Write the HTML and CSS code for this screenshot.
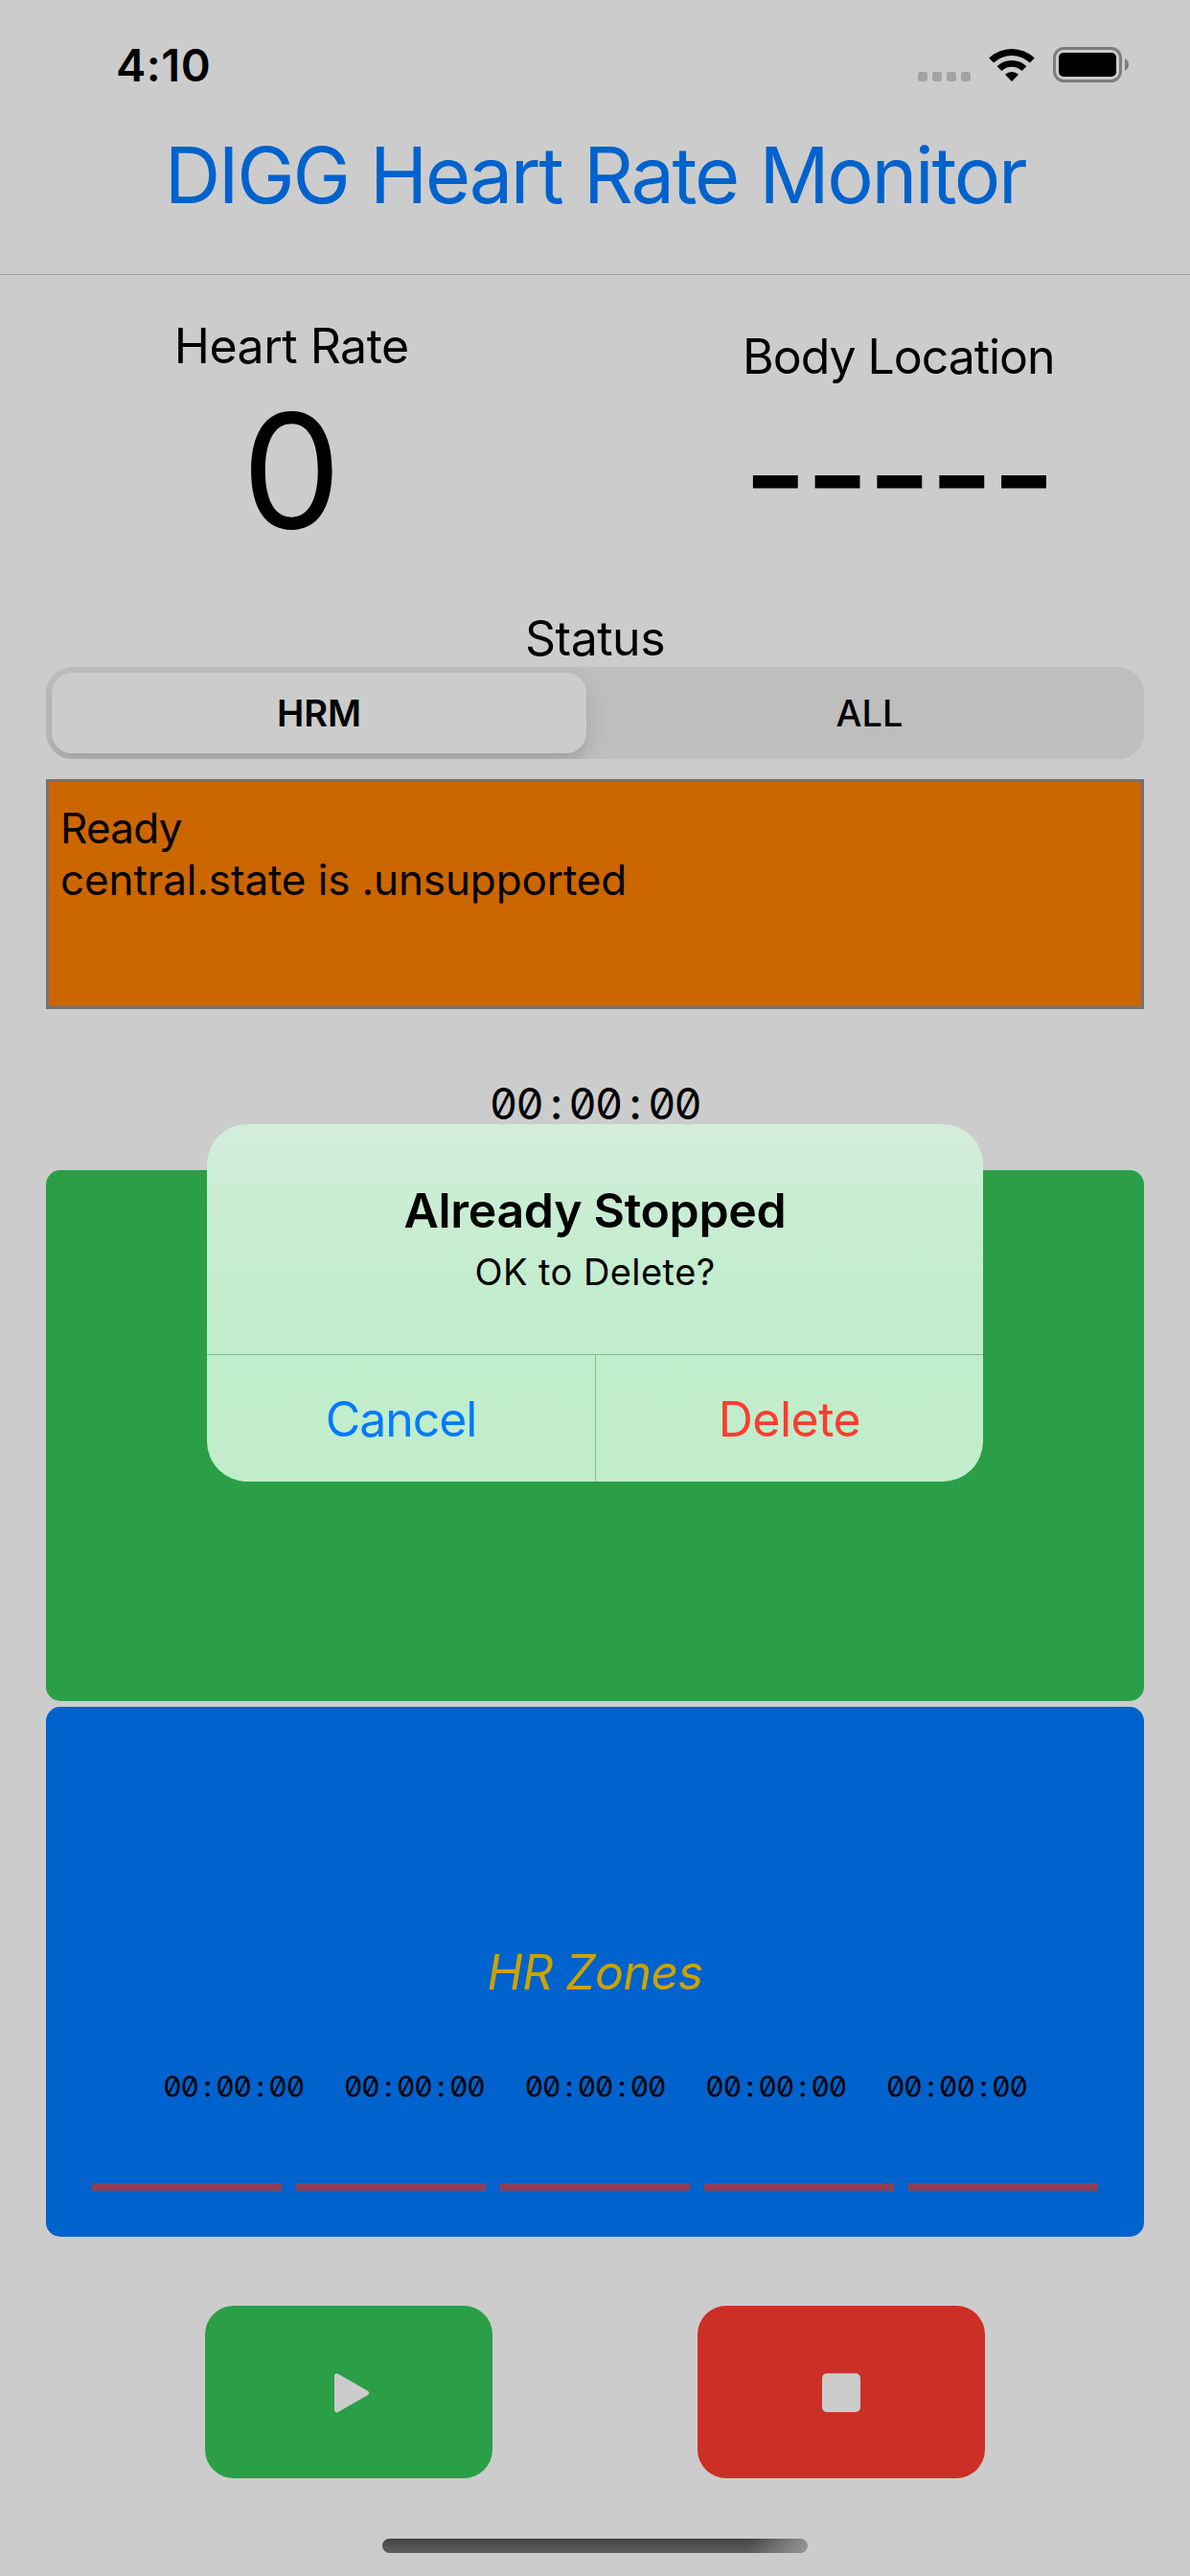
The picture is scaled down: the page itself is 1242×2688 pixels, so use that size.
FILE: index.html
```html
<!DOCTYPE html>
<html lang="en">
<head>
<meta charset="utf-8">
<title>DIGG Heart Rate Monitor</title>
<link rel="stylesheet" href="styles.css">
</head>
<body>
<div class="screen">
  <div class="status-bar">
    <span class="clock">4:10</span>
    <div class="indicators">
      <div class="signal"><i></i><i></i><i></i><i></i></div>
      <svg class="wifi" width="50" height="38" viewBox="0 0 50 38">
        <path d="M1.2 11.6A34 34 0 0 1 48.8 11.6L43.9 16.6A27 27 0 0 0 6.1 16.6Z"/>
        <path d="M9.6 20.2A22 22 0 0 1 40.4 20.2L35.6 25.1A15.2 15.2 0 0 0 14.4 25.1Z"/>
        <path d="M18 28.8A10.2 10.2 0 0 1 32 28.8L25 36Z"/>
      </svg>
      <svg class="battery" width="80" height="37" viewBox="0 0 80 37">
        <rect class="shell" x="1.5" y="1.5" width="69" height="34" rx="10"/>
        <rect x="6" y="6" width="60" height="25" rx="5"/>
        <path class="cap" d="M75 12.2C77.6 13.4 79 15.8 79 18.5S77.600 23.600 75 24.800Z"/>
      </svg>
    </div>
  </div>

  <header class="title-bar"><h1>DIGG Heart Rate Monitor</h1></header>

  <section class="metrics">
    <div class="metric">
      <div class="label">Heart Rate</div>
      <div class="rate">0</div>
    </div>
    <div class="metric lowered">
      <div class="label wide">Body Location</div>
      <div class="location">-----</div>
    </div>
  </section>

  <div class="label">Status</div>
  <div class="segmented">
    <div class="segment selected">HRM</div>
    <div class="segment">ALL</div>
  </div>

  <div class="log">
    <p class="log-ready">Ready</p>
    <p>central.state is .unsupported</p>
  </div>

  <div class="timer">00<b>:</b>00<b>:</b>00</div>

  <div class="panel chart"></div>
  <div class="panel zones">
    <h2>HR Zones</h2>
    <div class="zone-times">
      <span class="mono">00<b>:</b>00<b>:</b>00</span>
      <span class="mono">00<b>:</b>00<b>:</b>00</span>
      <span class="mono">00<b>:</b>00<b>:</b>00</span>
      <span class="mono">00<b>:</b>00<b>:</b>00</span>
      <span class="mono">00<b>:</b>00<b>:</b>00</span>
    </div>
    <div class="zone-bars"><i></i><i></i><i></i><i></i><i></i></div>
  </div>

  <div class="controls">
    <div class="button start">
      <svg width="300" height="180" viewBox="0 0 300 180">
        <path d="M137.500 73.200 168.500 91 137.500 108.800Z"/>
      </svg>
    </div>
    <div class="button stop">
      <svg width="300" height="180" viewBox="0 0 300 180">
        <rect x="130" y="70.500" width="40" height="40.500" rx="5"/>
      </svg>
    </div>
  </div>

  <div class="home-indicator"></div>

  <div class="alert">
    <div class="alert-body">
      <div class="alert-title">Already Stopped</div>
      <div class="alert-message">OK to Delete?</div>
    </div>
    <div class="alert-actions">
      <div class="action cancel">Cancel</div>
      <div class="action delete">Delete</div>
    </div>
  </div>
</div>
</body>
</html>
```
FILE: styles.css
```css
* { box-sizing: border-box; }

body {
  margin: 0;
  background: #ccc;
  color: #000;
  font-family: Inter, "Liberation Sans", sans-serif;
}

h1, h2, p { margin: 0; font-weight: 400; }

.screen {
  position: relative;
  width: 1242px;
  height: 2688px;
  overflow: hidden;
}

.status-bar {
  display: flex;
  justify-content: space-between;
  height: 120px;
  padding: 0 63px 0 121px;
}
.clock {
  font-size: 47px;
  font-weight: 600;
  line-height: 136px;
  letter-spacing: 0.5px;
}
.indicators {
  display: flex;
  align-items: flex-start;
  padding-top: 49px;
}
.signal {
  display: flex;
  gap: 5px;
  padding-top: 26px;
}
.signal i {
  width: 10px;
  height: 10px;
  border-radius: 3px;
  background: #a3a3a3;
}
.wifi { margin: 0 18px 0 18.500px; }
.battery .shell { fill: none; stroke: #7d7d7d; stroke-width: 3; }
.battery .cap { fill: #7d7d7d; }

.title-bar {
  height: 167px;
  border-bottom: 1px solid #9d9d9f;
  text-align: center;
}
.title-bar h1 {
  color: #0062cc;
  font-size: 81px;
  line-height: 127px;
  letter-spacing: -2.300px;
  word-spacing: 2px;
}

.metrics {
  display: grid;
  grid-template-columns: 1fr 1fr;
  column-gap: 25px;
  height: 349px;
  padding-top: 44px;
  text-align: center;
}
.lowered { padding-top: 11px; }
.label {
  font-size: 50px;
  line-height: 60px;
  letter-spacing: -0.500px;
  text-align: center;
}
.label.wide { letter-spacing: -1.050px; }
.rate { font-size: 165px; line-height: 201px; }
.location {
  font-size: 145px;
  font-weight: 500;
  line-height: 186px;
  letter-spacing: -2.200px;
}

.segmented {
  display: grid;
  grid-template-columns: 1fr 1fr;
  height: 96px;
  margin: 0 48px;
  border-radius: 27px;
  background: #bebebe;
  overflow: hidden;
  font-size: 38px;
  font-weight: 500;
  text-align: center;
}
.segment { line-height: 96px; }
.segment.selected {
  margin: 6px 9px 6px 6px;
  border-radius: 21px;
  background: #ccc;
  box-shadow: 0 9px 24px rgba(0, 0, 0, 0.12), 0 9px 3px rgba(0, 0, 0, 0.03);
  font-weight: 600;
  line-height: 84px;
}

.log {
  height: 240px;
  margin: 21px 48px 0;
  padding: 21px 12px 0;
  border: 3px solid #727276;
  background: #cc6600;
  font-size: 44px;
  line-height: 54px;
  letter-spacing: -0.120px;
}
.log-ready { letter-spacing: -0.700px; }

.timer, .mono {
  font-size: 45px;
  line-height: 60px;
  letter-spacing: -0.0385em;
  text-align: center;
  white-space: nowrap;
  font-feature-settings: "tnum", "zero", "calt" 0;
}
.timer b, .mono b {
  display: inline-block;
  width: 0.615em;
  font-weight: 500;
  text-align: center;
}
.timer { margin: 69px 0 39px; }

.panel { margin: 0 48px; border-radius: 15px; }
.chart { height: 554px; background: #2a9f47; }
.zones {
  height: 553px;
  margin-top: 6px;
  padding: 247px 48px 0;
  background: #0062cc;
}
.zones h2 {
  color: #cca300;
  font-size: 50px;
  font-style: italic;
  line-height: 60px;
  letter-spacing: -0.600px;
  text-align: center;
}
.zone-times {
  display: flex;
  justify-content: center;
  gap: 42px;
  margin-top: 69px;
}
.mono { font-size: 30px; line-height: 40px; }
.zone-bars {
  display: grid;
  grid-template-columns: repeat(5, 1fr);
  gap: 15px;
  margin-top: 81px;
}
.zone-bars i { height: 8px; background: #8f3f56; }

.controls {
  display: flex;
  justify-content: center;
  gap: 214px;
  margin-top: 72px;
}
.button { width: 300px; height: 180px; border-radius: 30px; }
.button svg { display: block; fill: #ccc; }
.start { background: #2a9f47; }
.start path { stroke: #ccc; stroke-width: 5; stroke-linejoin: round; }
.stop { background: #cc2f26; }

.home-indicator {
  width: 444px;
  height: 15px;
  margin: 63px auto 0;
  border-radius: 7.500px;
  background:
    linear-gradient(100deg, rgba(150, 150, 150, 0) 86%, #959595 100%),
    linear-gradient(#444, #5e5e5e);
}

.alert {
  position: absolute;
  top: 1173px;
  left: 216px;
  width: 810px;
  height: 373px;
  border-radius: 42px;
  background: linear-gradient(#d4eddb 0%, #caedd3 22%, #c3edce 45%, #c0edcb 65%, #c1edcb 100%);
  overflow: hidden;
  text-align: center;
}
.alert-body {
  height: 241px;
  padding-top: 60px;
  border-bottom: 1px solid #7cc18d;
}
.alert-title {
  font-size: 50px;
  font-weight: 600;
  line-height: 60px;
  letter-spacing: -0.330px;
}
.alert-message {
  margin-top: 10px;
  font-size: 38px;
  line-height: 48px;
  letter-spacing: 0.450px;
}
.alert-actions {
  display: grid;
  grid-template-columns: 406px 1fr;
  height: 132px;
  font-size: 50px;
  line-height: 134px;
}
.cancel {
  border-right: 1px solid #7cc18d;
  color: #007aff;
  letter-spacing: -1.050px;
}
.delete { color: #ff3b30; letter-spacing: -0.500px; }
```
